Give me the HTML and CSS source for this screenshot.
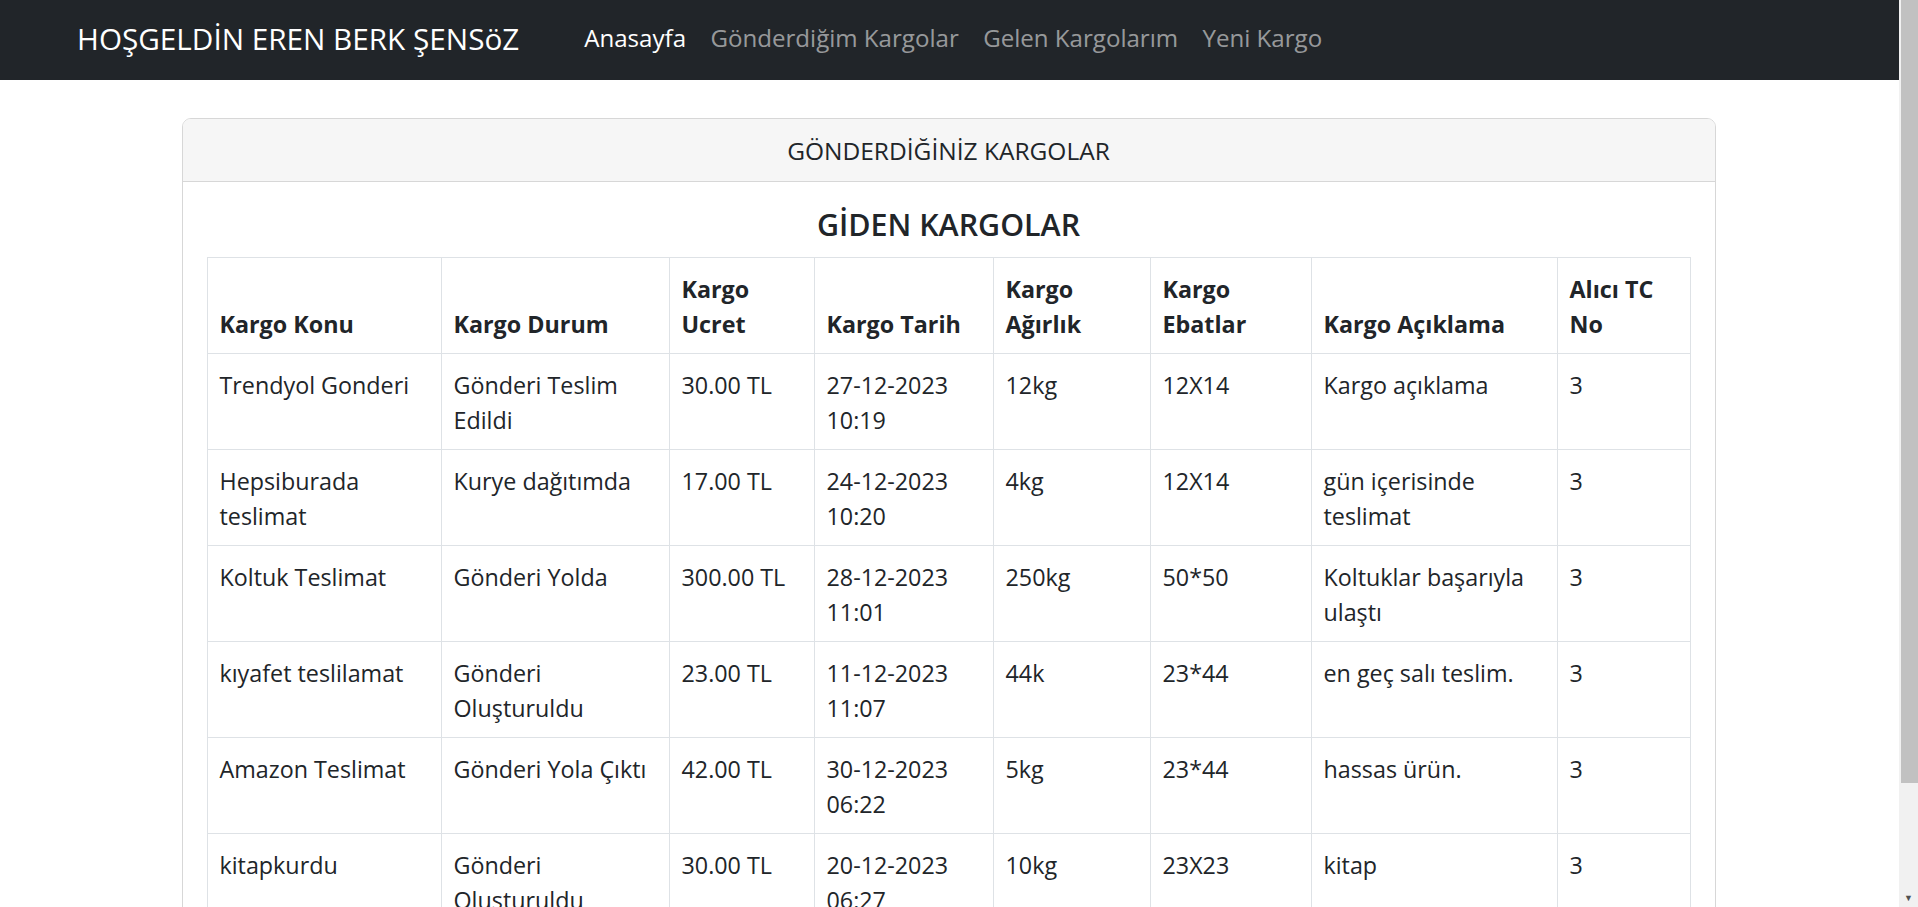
FILE: index.html
```html
<!DOCTYPE html>
<html lang="tr">
<head>
<meta charset="utf-8">
<title>Gönderdiğim Kargolar</title>
<link rel="stylesheet" href="styles.css">
</head>
<body>
<div class="page">
  <nav class="navbar">
    <a class="brand" href="#">HOŞGELDİN EREN BERK ŞENSöZ</a>
    <ul class="nav">
      <li><a class="nav-link active" href="#">Anasayfa</a></li>
      <li><a class="nav-link" href="#">Gönderdiğim Kargolar</a></li>
      <li><a class="nav-link" href="#">Gelen Kargolarım</a></li>
      <li><a class="nav-link" href="#">Yeni Kargo</a></li>
    </ul>
  </nav>
  <main class="container">
    <section class="card">
      <div class="card-header">GÖNDERDİĞİNİZ KARGOLAR</div>
      <div class="card-body">
        <h5 class="card-title">GİDEN KARGOLAR</h5>
        <table class="table">
          <colgroup>
            <col class="c1"><col class="c2"><col class="c3"><col class="c4">
            <col class="c5"><col class="c6"><col class="c7"><col class="c8">
          </colgroup>
          <thead>
            <tr>
              <th>Kargo Konu</th>
              <th>Kargo Durum</th>
              <th>Kargo Ucret</th>
              <th>Kargo Tarih</th>
              <th>Kargo Ağırlık</th>
              <th>Kargo Ebatlar</th>
              <th>Kargo Açıklama</th>
              <th>Alıcı TC No</th>
            </tr>
          </thead>
          <tbody>
            <tr>
              <td>Trendyol Gonderi</td><td>Gönderi Teslim Edildi</td><td>30.00 TL</td><td>27-12-2023 10:19</td><td>12kg</td><td>12X14</td><td>Kargo açıklama</td><td>3</td>
            </tr>
            <tr>
              <td>Hepsiburada teslimat</td><td>Kurye dağıtımda</td><td>17.00 TL</td><td>24-12-2023 10:20</td><td>4kg</td><td>12X14</td><td>gün içerisinde teslimat</td><td>3</td>
            </tr>
            <tr>
              <td>Koltuk Teslimat</td><td>Gönderi Yolda</td><td>300.00 TL</td><td>28-12-2023 11:01</td><td>250kg</td><td>50*50</td><td>Koltuklar başarıyla ulaştı</td><td>3</td>
            </tr>
            <tr>
              <td>kıyafet teslilamat</td><td>Gönderi Oluşturuldu</td><td>23.00 TL</td><td>11-12-2023 11:07</td><td>44k</td><td>23*44</td><td>en geç salı teslim.</td><td>3</td>
            </tr>
            <tr>
              <td>Amazon Teslimat</td><td>Gönderi Yola Çıktı</td><td>42.00 TL</td><td>30-12-2023 06:22</td><td>5kg</td><td>23*44</td><td>hassas ürün.</td><td>3</td>
            </tr>
            <tr>
              <td>kitapkurdu</td><td>Gönderi Oluşturuldu</td><td>30.00 TL</td><td>20-12-2023 06:27</td><td>10kg</td><td>23X23</td><td>kitap</td><td>3</td>
            </tr>
          </tbody>
        </table>
      </div>
    </section>
  </main>
</div>
<div class="scrollbar" aria-hidden="true">
  <div class="sb-thumb"></div>
  <div class="sb-arrow">▼</div>
</div>
</body>
</html>
```

FILE: styles.css
```css
html {
  overflow: hidden;
}
body {
  margin: 0;
  font-family: "Open Sans", "Noto Sans", "Liberation Sans", sans-serif;
  font-size: 23.3px;
  line-height: 35.5px;
  color: #212529;
  background: #fff;
}
.page {
  margin-right: 21px;
}
.navbar {
  display: flex;
  align-items: center;
  height: 76px;
  margin-right: -2px;
  padding: 0 0 4px 77px;
  background: #212529;
}
.brand {
  flex: 0 0 495px;
  color: #fff;
  text-decoration: none;
  font-size: 29.7px;
  line-height: 45px;
  white-space: nowrap;
}
.nav {
  display: flex;
  list-style: none;
  margin: 0;
  padding: 0;
}
.nav-link {
  display: block;
  padding: 0 12.2px;
  font-size: 24.1px;
  color: rgba(255, 255, 255, 0.55);
  text-decoration: none;
  white-space: nowrap;
}
.nav-link.active {
  color: #fff;
}
.container {
  display: flex;
  justify-content: center;
  padding-top: 38px;
}
.card {
  width: 1534px;
  box-sizing: border-box;
  border: 1px solid #d7d7d7;
  border-radius: 9px;
  background: #fff;
}
.card-header {
  padding: 14px 24px 12px;
  background: #f6f6f6;
  border-bottom: 1px solid #d7d7d7;
  border-radius: 8px 8px 0 0;
  font-size: 24.5px;
  text-align: center;
}
.card-body {
  padding: 25px 24px 24px;
}
.card-title {
  margin: 0 0 14px;
  font-size: 30.4px;
  line-height: 36px;
  font-weight: 600;
  text-align: center;
}
.table {
  width: 100%;
  table-layout: fixed;
  border-collapse: collapse;
}
.c1 { width: 234px; }
.c2 { width: 228px; }
.c3 { width: 145px; }
.c4 { width: 179px; }
.c5 { width: 157px; }
.c6 { width: 161px; }
.c7 { width: 246px; }
.c8 { width: 133px; }
.table th,
.table td {
  border: 1px solid #dee2e6;
  padding: 14px 12px 10px;
  text-align: left;
}
.table th {
  vertical-align: bottom;
  font-weight: 700;
}
.table td {
  vertical-align: top;
}
.scrollbar {
  position: fixed;
  top: 0;
  right: 0;
  width: 19px;
  height: 100%;
  background: #f1f1f1;
}
.sb-thumb {
  position: absolute;
  top: 0;
  left: 2px;
  right: 0;
  height: 783px;
  background: #c1c1c1;
}
.sb-arrow {
  position: absolute;
  bottom: 4px;
  left: 0;
  right: 0;
  text-align: center;
  font-size: 9px;
  line-height: 10px;
  color: #505050;
}
```
